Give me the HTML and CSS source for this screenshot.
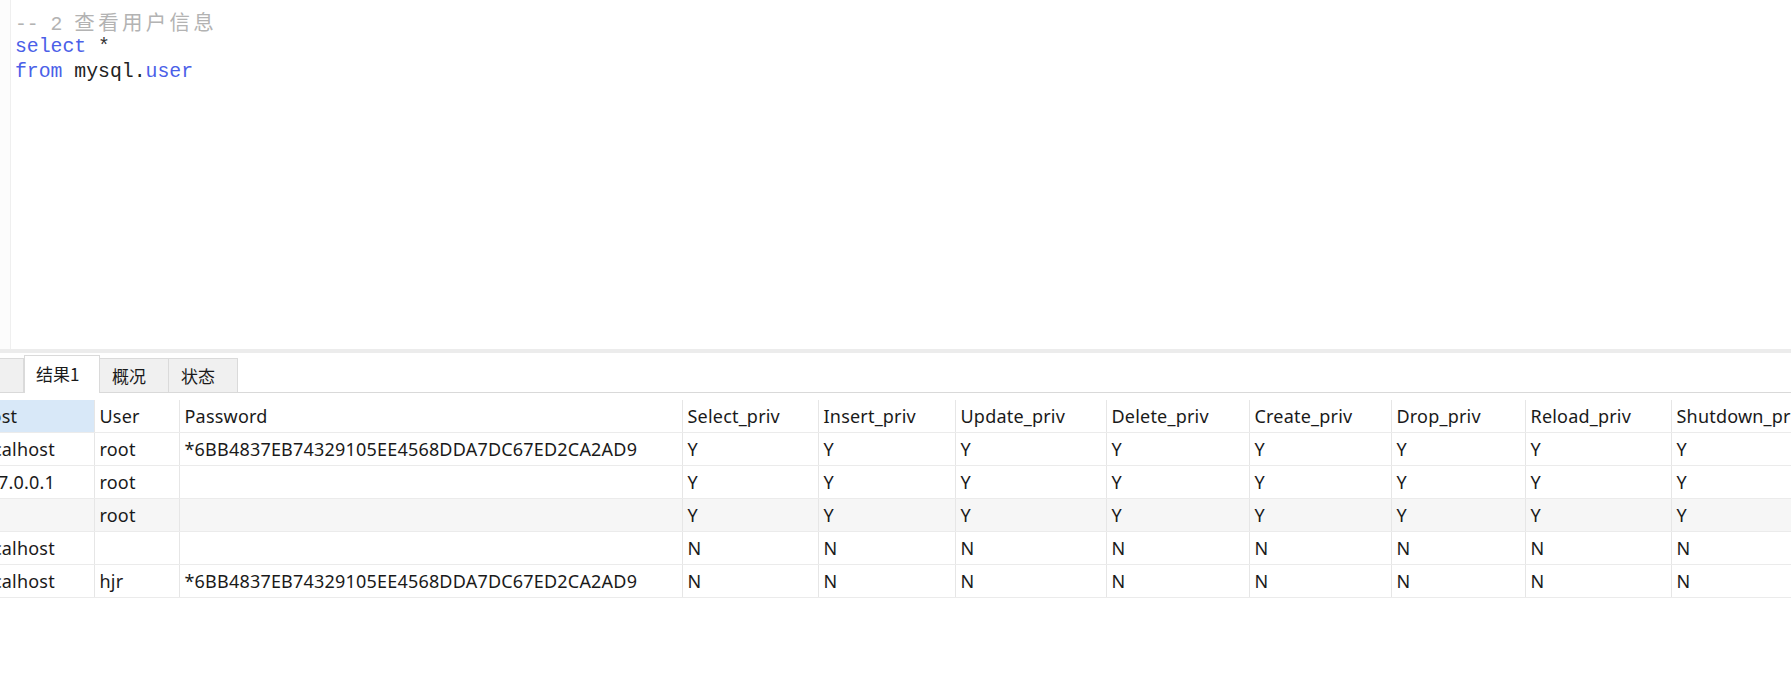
FILE: index.html
```html
<!DOCTYPE html>
<html lang="zh-CN">
<head>
<meta charset="utf-8">
<title>查看用户信息</title>
<link rel="stylesheet" href="styles.css">
</head>
<body>
<div class="app">
  <div class="editor">
    <div class="gutter"></div>
    <div class="code">
      <div class="line"><span class="cm">-- 2 <span class="cjk">查看用户信息</span></span></div>
      <div class="line"><span class="kw">select</span> <span class="op">*</span></div>
      <div class="line"><span class="kw">from</span> <span class="id">mysql.</span><span class="kw">user</span></div>
    </div>
  </div>
  <div class="splitter"></div>
  <div class="results">
    <div class="tabs">
      <div class="tab first">信息</div>
      <div class="tab active">结果1</div>
      <div class="tab">概况</div>
      <div class="tab">状态</div>
    </div>
    <div class="grid-wrap">
      <table class="grid">
        <colgroup>
          <col class="c-host"><col class="c-user"><col class="c-pass"><col class="c-sel"><col class="c-ins"><col class="c-upd"><col class="c-del"><col class="c-cre"><col class="c-drop"><col class="c-rel"><col class="c-shut">
        </colgroup>
        <thead>
          <tr>
            <th class="sel-col">Host</th><th>User</th><th>Password</th><th>Select_priv</th><th>Insert_priv</th><th>Update_priv</th><th>Delete_priv</th><th>Create_priv</th><th>Drop_priv</th><th>Reload_priv</th><th>Shutdown_priv</th>
          </tr>
        </thead>
        <tbody>
          <tr><td>localhost</td><td>root</td><td>*6BB4837EB74329105EE4568DDA7DC67ED2CA2AD9</td><td>Y</td><td>Y</td><td>Y</td><td>Y</td><td>Y</td><td>Y</td><td>Y</td><td>Y</td></tr>
          <tr><td>127.0.0.1</td><td>root</td><td></td><td>Y</td><td>Y</td><td>Y</td><td>Y</td><td>Y</td><td>Y</td><td>Y</td><td>Y</td></tr>
          <tr class="hover"><td>::1</td><td>root</td><td></td><td>Y</td><td>Y</td><td>Y</td><td>Y</td><td>Y</td><td>Y</td><td>Y</td><td>Y</td></tr>
          <tr><td>localhost</td><td></td><td></td><td>N</td><td>N</td><td>N</td><td>N</td><td>N</td><td>N</td><td>N</td><td>N</td></tr>
          <tr><td>localhost</td><td>hjr</td><td>*6BB4837EB74329105EE4568DDA7DC67ED2CA2AD9</td><td>N</td><td>N</td><td>N</td><td>N</td><td>N</td><td>N</td><td>N</td><td>N</td></tr>
        </tbody>
      </table>
    </div>
  </div>
</div>
</body>
</html>
```
FILE: styles.css
```css
html, body {
  margin: 0;
  padding: 0;
  background: #ffffff;
}
body {
  width: 1791px;
  height: 684px;
  overflow: hidden;
}
.app {
  display: flex;
  flex-direction: column;
  height: 684px;
}
.editor {
  display: flex;
  height: 349px;
  flex: none;
}
.gutter {
  width: 10px;
  border-right: 1px solid #efefef;
  background: #fcfcfc;
  flex: none;
}
.code {
  padding: 9px 0 0 4px;
  font-family: "Liberation Mono", "Noto Sans CJK SC", monospace;
  font-size: 19.8px;
  line-height: 25.5px;
  color: #222;
}
.line {
  white-space: pre;
  height: 25.5px;
}
.cm { color: #b3b3b3; }
.cjk {
  font-family: "Noto Sans CJK SC", sans-serif;
  font-size: 20.5px;
  letter-spacing: 3.3px;
}
.kw { color: #4b5fe8; }
.op { color: #333; }
.id { color: #222; }
.splitter {
  height: 4px;
  background: #ececec;
  flex: none;
}
.results {
  flex: 1;
  display: flex;
  flex-direction: column;
  overflow: hidden;
}
.tabs {
  display: flex;
  align-items: flex-end;
  height: 39px;
  border-bottom: 1px solid #d9d9d9;
  flex: none;
  font-family: "Noto Sans CJK SC", sans-serif;
  font-size: 17px;
  color: #1a1a1a;
}
.tab {
  height: 34px;
  line-height: 33px;
  box-sizing: border-box;
  padding: 0 0 0 12px;
  background: #f0f0f0;
  border: 1px solid #dadada;
  border-bottom: none;
  border-left: none;
  width: 69px;
  white-space: nowrap;
  overflow: hidden;
}
.tab.first {
  width: 70px;
  margin-left: -46px;
  padding-left: 12px;
}
.tab.active {
  height: 38px;
  line-height: 36px;
  width: 76px;
  background: #ffffff;
  border-left: 1px solid #dadada;
  margin-bottom: -1px;
  padding-left: 11px;
  position: relative;
}
.grid-wrap {
  padding-top: 7px;
  overflow: hidden;
}
.grid {
  border-collapse: collapse;
  table-layout: fixed;
  margin-left: -28px;
  width: 1849px;
  font-family: "Noto Sans", "Noto Sans CJK SC", sans-serif;
  font-size: 18px;
  letter-spacing: 0.2px;
  color: #1a1a1a;
}
.c-host { width: 122px; }
.c-user { width: 85px; }
.c-pass { width: 503px; }
.c-sel { width: 136px; }
.c-ins { width: 137px; }
.c-upd { width: 151px; }
.c-del { width: 143px; }
.c-cre { width: 142px; }
.c-drop { width: 134px; }
.c-rel { width: 146px; }
.c-shut { width: 150px; }
.grid th, .grid td {
  height: 32px;
  padding: 0 0 0 5px;
  text-align: left;
  font-weight: normal;
  white-space: nowrap;
  overflow: hidden;
  border-right: 1px solid #e6e6e6;
  border-bottom: 1px solid #ebebeb;
}
.grid th.sel-col {
  background: #d8e8f8;
}
.grid tr.hover td {
  background: #f6f6f6;
}
```
